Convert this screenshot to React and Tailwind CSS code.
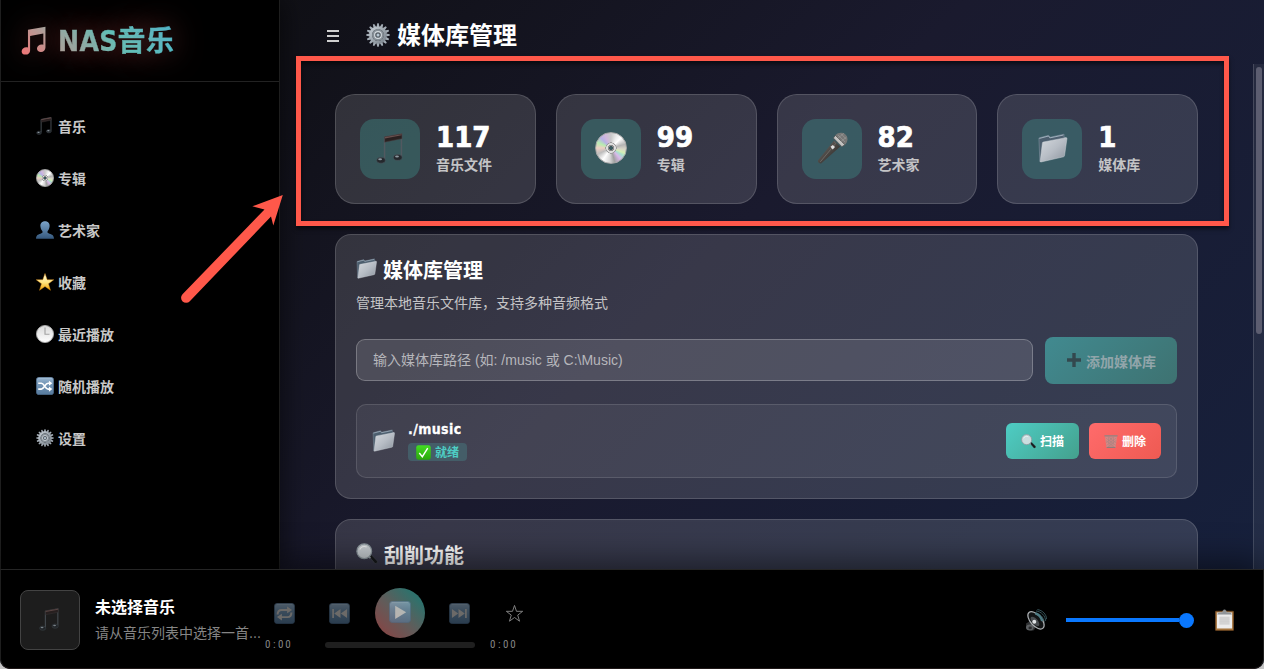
import clsx from 'clsx';

const NAV_ITEMS = [
  { label: '音乐', icon: NoteIcon },
  { label: '专辑', icon: DiscIcon },
  { label: '艺术家', icon: PersonIcon },
  { label: '收藏', icon: StarIcon },
  { label: '最近播放', icon: ClockIcon },
  { label: '随机播放', icon: ShuffleIcon },
  { label: '设置', icon: GearIcon },
];

const STATS = [
  { value: 117, label: '音乐文件', icon: NoteIcon },
  { value: 99, label: '专辑', icon: DiscIcon },
  { value: 82, label: '艺术家', icon: MicIcon },
  { value: 1, label: '媒体库', icon: FolderIcon },
];

// Gradients shared by the icons below
function IconDefs() {
  return (
    <svg className="absolute w-0 h-0" aria-hidden="true">
      <defs>
        <linearGradient id="brand" gradientUnits="userSpaceOnUse" x1="0" y1="32" x2="28" y2="0">
          <stop offset="0" stopColor="#f27475" />
          <stop offset="1" stopColor="#a3a69f" />
        </linearGradient>
        <linearGradient id="person" x1="0" y1="0" x2="0" y2="1">
          <stop offset="0" stopColor="#7ba3c8" />
          <stop offset="1" stopColor="#35587d" />
        </linearGradient>
        <linearGradient id="star" x1="0" y1="0" x2="0" y2="1">
          <stop offset="0.2" stopColor="#fff6c4" />
          <stop offset="0.55" stopColor="#ffe27a" />
          <stop offset="1" stopColor="#f0a000" />
        </linearGradient>
        <linearGradient id="clock" x1="0" y1="0" x2="0" y2="1">
          <stop offset="0" stopColor="#d8d8d8" />
          <stop offset="1" stopColor="#ffffff" />
        </linearGradient>
        <linearGradient id="key" x1="0" y1="0" x2="0" y2="1">
          <stop offset="0" stopColor="#9ab7d2" />
          <stop offset="0.35" stopColor="#7899b8" />
          <stop offset="1" stopColor="#55799c" />
        </linearGradient>
        <linearGradient id="gear" x1="0" y1="0" x2="1" y2="1">
          <stop offset="0" stopColor="#c3cbd2" />
          <stop offset="1" stopColor="#7a838c" />
        </linearGradient>
        <linearGradient id="folder" x1="0" y1="0" x2="1" y2="1">
          <stop offset="0" stopColor="#d4d8dd" />
          <stop offset="0.5" stopColor="#b7bdc5" />
          <stop offset="1" stopColor="#8b939d" />
        </linearGradient>
        <linearGradient id="mic" x1="0" y1="0" x2="1" y2="1">
          <stop offset="0" stopColor="#77736f" />
          <stop offset="1" stopColor="#1d1a18" />
        </linearGradient>
        <linearGradient id="check" x1="0" y1="0" x2="0" y2="1">
          <stop offset="0" stopColor="#43dd22" />
          <stop offset="1" stopColor="#2aa80c" />
        </linearGradient>
      </defs>
    </svg>
  );
}

function NoteIcon({ className }) {
  return (
    <svg viewBox="0 0 28 32" className={className}>
      <path d="M8.900 27V4.500L26.400 1v23.500" fill="none" stroke="#515960" strokeWidth="1.500" />
      <path d="M9 3.800 26.900.6v5.200L9 9.400z" fill="#2a2020" stroke="#4b4547" strokeWidth="0.500" />
      <path d="M9.300 4.200 26.600 1.100v1.200L9.300 5.500z" fill="#69504e" />
      <ellipse cx="5.200" cy="28.200" rx="4.400" ry="3" fill="#24282c" stroke="#4a545c" strokeWidth="0.600" />
      <ellipse cx="22.600" cy="25.300" rx="4.400" ry="3" fill="#24282c" stroke="#4a545c" strokeWidth="0.600" />
      <ellipse cx="4.300" cy="27.200" rx="2" ry="1.100" fill="#a9b5be" opacity="0.800" />
      <ellipse cx="21.800" cy="24.300" rx="2" ry="1.100" fill="#a9b5be" opacity="0.800" />
    </svg>
  );
}

function BrandNote({ className }) {
  return (
    <svg viewBox="0 0 28 32" className={className}>
      <path
        d="M7.800 4 27.400.6v23.200c0 3-2.200 5-5.100 5-2.600 0-4.400-1.500-4.400-3.800 0-2.700 2.400-4.600 5.200-4.600.7 0 1.300.1 1.900.3V8.200L10.200 11v16.100c0 3-2.200 4.700-5 4.700-2.700 0-4.500-1.300-4.500-3.600 0-2.700 2.400-4.600 5.200-4.600.7 0 1.300.1 1.900.3z"
        fill="url(#brand)"
      />
    </svg>
  );
}

function DiscIcon({ className }) {
  return (
    <span
      className={clsx(
        'block rounded-full border border-[#a7a7a7] bg-[radial-gradient(circle,#3a5a60_0_9%,#8c8c8c_10%_15%,#dedede_16%_22%,#9c9c9c_23%_26%,transparent_27%),conic-gradient(#c9c9c9,#ececec_25deg,#ffffff_45deg,#b4b4b4_75deg,#d8d6c8_95deg,#d5efb4_110deg,#a9e0cf_122deg,#dab8ea_140deg,#a0a0a0_165deg,#d6d6d6_185deg,#ffffff_215deg,#bdbdbd_245deg,#eecfc3_270deg,#b7ecb0_292deg,#b8b1e6_315deg,#d0b7dc_335deg,#c9c9c9)]',
        className
      )}
    />
  );
}

function PersonIcon({ className }) {
  return (
    <svg viewBox="0 0 32 32" className={className}>
      <path
        d="M16 .4c5.500 0 8.600 3.800 8.200 9-.3 4-1.900 6.800-3.700 8.600v2.200c0 1.200 1 1.800 3.400 2.500 5 1.500 8 2.800 8 8.900H.1c0-6.100 3-7.400 8-8.900 2.400-.7 3.400-1.300 3.400-2.500V18c-1.800-1.800-3.400-4.600-3.700-8.600-.4-5.200 2.700-9 8.200-9z"
        fill="url(#person)"
      />
    </svg>
  );
}

function StarIcon({ className }) {
  return (
    <svg viewBox="0 0 32 32" className={className}>
      <path
        d="m16 .8 3.900 11.200h11.700l-9.400 7.100 3.500 11.700L16 23.900l-9.700 6.900 3.500-11.700L.4 12h11.700z"
        fill="url(#star)"
        stroke="#dc8b13"
        strokeWidth="0.800"
      />
    </svg>
  );
}

function ClockIcon({ className }) {
  return (
    <svg viewBox="0 0 32 32" className={className}>
      <circle cx="16" cy="16" r="15.200" fill="url(#clock)" stroke="#a9a9a9" strokeWidth="1.600" />
      <path d="M16 4.500v12h8" fill="none" stroke="#a2a2a2" strokeWidth="2" />
    </svg>
  );
}

// Rounded blue keycap used by the shuffle and transport icons
function KeyIcon({ className, children }) {
  return (
    <svg viewBox="0 0 32 32" className={className}>
      <rect x="0.500" y="0.500" width="31" height="31" rx="5" fill="url(#key)" stroke="#496a8b" />
      <path d="M4 2h24" stroke="#bcd0e2" strokeWidth="1" opacity="0.700" />
      {children}
    </svg>
  );
}

function ShuffleIcon({ className }) {
  return (
    <KeyIcon className={className}>
      <path
        d="M4 11h5.500c5 0 6.500 10.500 12 10.500H25M4 21.500h5.500c5 0 6.500-10.500 12-10.500H25"
        fill="none"
        stroke="#fff"
        strokeWidth="2.800"
      />
      <path d="m23 6.500 6 4.500-6 4.500zM23 17l6 4.500-6 4.500z" fill="#fff" />
    </KeyIcon>
  );
}

function RepeatIcon({ className }) {
  return (
    <KeyIcon className={className}>
      <path
        d="M5.500 17.500c0-5 2-7 6-7h10M26.500 14.500c0 5-2 7-6 7h-10"
        fill="none"
        stroke="#d8d4d0"
        strokeWidth="3"
      />
      <path d="m20 5.500 7.500 5-7.500 5zM12 16.500l-7.500 5 7.500 5z" fill="#d8d4d0" />
    </KeyIcon>
  );
}

function PrevIcon({ className }) {
  return (
    <KeyIcon className={className}>
      <path d="M5 9h2.500v14H5zM17.500 9v14L8 16zM27.500 9v14L18 16z" fill="#d8d4d0" />
    </KeyIcon>
  );
}

function NextIcon({ className }) {
  return (
    <KeyIcon className={className}>
      <path d="M24.500 9H27v14h-2.500zM4.500 9v14l9.500-7zM14.500 9v14l9.500-7z" fill="#d8d4d0" />
    </KeyIcon>
  );
}

function PlayIcon({ className }) {
  return (
    <KeyIcon className={className}>
      <path d="M9 7v19l16-9.500z" fill="#f2efec" />
    </KeyIcon>
  );
}

function GearIcon({ className }) {
  const teeth = Array.from({ length: 16 }, (_, i) => i * 22.5);
  return (
    <svg viewBox="0 0 32 32" className={className}>
      {teeth.map((angle) => (
        <path
          key={angle}
          d="M14 5.500 15 .4h2l1 5.100z"
          fill="#a4adb6"
          transform={`rotate(${angle} 16 16)`}
        />
      ))}
      <circle cx="16" cy="16" r="9.800" fill="none" stroke="url(#gear)" strokeWidth="4" />
      <circle cx="16" cy="16" r="8" fill="#858e96" />
      <circle cx="16" cy="16" r="4.500" fill="#555d65" stroke="#d5dbe0" strokeWidth="1.500" />
      <circle cx="16" cy="16" r="2" fill="#b8c7d3" />
    </svg>
  );
}

function MicIcon({ className }) {
  return (
    <svg viewBox="0 0 32 32" className={className}>
      <path d="m18 8.500 6.300 6L5.400 31.200c-1.300 1-4.300-1.300-3.300-2.900z" fill="url(#mic)" />
      <path d="m18.200 9.800 1.600 1.600L4.300 29.800" fill="none" stroke="#77716c" strokeWidth="0.800" />
      <path d="m14.500 14.800 2.300-1.800 2.200 2-2.300 2.500z" fill="#e0e0e0" />
      <path d="M18.500 4.300C21.200.4 26.500-.3 29.700 2.800c3.100 3.200 2 8.400-1.800 10.800z" fill="#777776" />
      <path d="m17.400 6 2-2.600 9.400 9.300-2.900 2z" fill="#c4c3c1" stroke="#444" strokeWidth="0.600" />
      <path d="m22 3 7 7M25 1.800l5.200 5.200M22 6.200l6-5M25 9.500l5.500-4.500" stroke="#a4a4a2" strokeWidth="0.500" />
    </svg>
  );
}

function FolderIcon({ className }) {
  return (
    <svg viewBox="0 0 32 32" className={className}>
      <path d="M1.500 5.300 11.800 2.500l1.700 2 14.800-3.200v3.400l2.300.2L4 29.800 2.500 30.500z" fill="#4c5e6e" stroke="#8495a4" strokeWidth="0.600" />
      <path d="M2 5.800 11.700 3.200l1.500 2L27.500 2.200" fill="none" stroke="#a3b3c0" strokeWidth="1" />
      <path d="M6.300 9.600 30.300 5c.9-.1 1.200.3 1.100 1.100l-2.600 18c-.1.800-.4 1.100-1.200 1.300L3.800 30.900c-.7.200-1-.2-.9-.9l2.300-19.200c.1-.7.400-1.100 1.100-1.200z" fill="url(#folder)" stroke="#d3d8dc" strokeWidth="0.500" />
    </svg>
  );
}

function SearchIcon({ className }) {
  return (
    <svg viewBox="0 0 32 32" className={className}>
      <path d="m19.500 20 3-2.600 8.500 8.800c1.300 1.600-1.700 4.800-3.500 3.400z" fill="#17191b" stroke="#50565b" strokeWidth="0.700" />
      <path d="m18 19.500 3 2.500" stroke="#9aa2a8" strokeWidth="2.400" />
      <circle cx="12" cy="12" r="10.700" fill="#dce3e5" fillOpacity="0.880" stroke="#8f9aa0" strokeWidth="1.800" />
      <path d="M5.500 9.500c1.500-4 6-5.500 10-3.700" fill="none" stroke="#fff" strokeWidth="1.600" opacity="0.700" />
    </svg>
  );
}

function TrashIcon({ className }) {
  return (
    <svg viewBox="0 0 32 32" className={className}>
      <path d="M2 4h28l-3.600 26c-.3 1.300-20.400 1.300-20.800 0z" fill="#c09a97" fillOpacity="0.650" />
      <path
        d="M4 8l23 17M4.500 14 24 29M10 5.500 27.500 19M28 8 5.500 25M27.500 14 8 29M22 5.500 4.500 19M10 6l2 24M16 6v24M22 6l-2 24"
        stroke="#8f8280"
        strokeWidth="0.800"
      />
      <rect x="0.500" y="1.500" width="31" height="3" rx="1.500" fill="#8d8584" />
      <path d="M6 29.500h20" stroke="#857b7a" strokeWidth="2.200" />
    </svg>
  );
}

function CheckIcon({ className }) {
  return (
    <svg viewBox="0 0 32 32" className={className}>
      <rect x="0.500" y="0.500" width="31" height="31" rx="5" fill="url(#check)" />
      <path d="m7 17 6.500 8L25 6.500" fill="none" stroke="#fff" strokeWidth="3" />
    </svg>
  );
}

function SpeakerIcon({ className }) {
  return (
    <svg viewBox="0 0 32 32" className={className}>
      <path d="M1.500 21 8 17l9 7-4 7c-4 1.500-10.500-.5-11.500-4z" fill="#303234" />
      <ellipse cx="7" cy="27" rx="5.500" ry="4.300" fill="#5c5f62" />
      <ellipse cx="7.500" cy="27.500" rx="2.500" ry="2" fill="#2a2b2d" />
      <path d="M15 5.500c7 1 12 6.500 13 14M16 2.800c8 1 13.500 7 14 14.500M18 .8c8 1.200 13 7 13.500 14" fill="none" stroke="#456a72" strokeWidth="1.100" />
      <ellipse cx="16" cy="16.500" rx="8" ry="15.300" transform="rotate(-42 16 16.500)" fill="#121415" stroke="#a9adb0" strokeWidth="1.800" />
      <path d="M15 6.500c5 1.500 8.500 5.500 10 11" fill="none" stroke="#4e7b84" strokeWidth="3.500" />
      <ellipse cx="14.500" cy="18" rx="4" ry="8.500" transform="rotate(-42 14.500 18)" fill="#484c50" />
      <circle cx="13.500" cy="18.500" r="2.900" fill="#dfe2e4" />
    </svg>
  );
}

function ClipboardIcon({ className }) {
  return (
    <svg viewBox="0 0 28 32" className={className}>
      <rect x="0.500" y="3" width="27" height="28.500" rx="1" fill="#a5733b" stroke="#6b4420" />
      <path d="M2.800 5h22.400v23.500H2.800z" fill="#ececec" />
      <path d="M6.500 11h15v12h-15z" fill="#d6d6d6" />
      <path d="M6.500 13h15M6.500 15.500h15M6.500 18h15M6.500 20.500h15" stroke="#c6c6c6" strokeWidth="0.600" />
      <path d="M3.500 7.800c0-2.300 2-3.300 6-3.300h1.700c0-5 5.600-5 5.600 0h1.700c4 0 6 1 6 3.300z" fill="#8f9498" stroke="#b4b8bb" strokeWidth="0.500" />
    </svg>
  );
}

function Sidebar() {
  return (
    <aside className="relative z-10 w-[280px] shrink-0 bg-black border-x border-[#1e1e1e] shadow-[4px_0_24px_rgba(0,0,0,0.5)]">
      <div className="h-[82px] flex items-center pl-[20px] border-b border-[#222222]">
        <BrandNote className="w-[25px] h-[29px] mr-[12px] [filter:drop-shadow(0_0_14px_rgba(255,107,107,0.35))]" />
        <h1 className="text-[28px] leading-[42px] pt-[2px] font-bold whitespace-nowrap tracking-[0.300px] text-transparent bg-clip-text bg-[linear-gradient(45deg,#b59f98_0%,#4ecdc4_52%,#45b7d1_100%)] [text-shadow:0_0_30px_rgba(255,107,107,0.5)] [-webkit-text-stroke:0.400px_transparent]">
          NAS音乐
        </h1>
      </div>
      <nav className="pt-[19px]">
        {NAV_ITEMS.map(({ label, icon: Icon }) => (
          <div key={label} className="h-[52px] flex items-center pl-[35px] gap-[4px]">
            <Icon className={clsx('h-[18px] shrink-0 -mt-[2px]', Icon === NoteIcon ? 'w-[16px] mr-[2px]' : 'w-[18px]')} />
            <span className="text-[14px] font-bold leading-[20px] text-[#c8c8c8]">{label}</span>
          </div>
        ))}
      </nav>
    </aside>
  );
}

function StatCard({ value, label, icon: Icon }) {
  return (
    <div className="h-[110px] flex items-center gap-[16px] px-[24px] rounded-[20px] border border-white/15 bg-[#ffffff22]">
      <div className="w-[60px] h-[60px] shrink-0 rounded-[14px] bg-[#3b8480]/45 flex items-center justify-center">
        <Icon
          className={clsx(
            '-mt-[2px]',
            Icon === NoteIcon && 'w-[27px] h-[31px] -ml-[2px]',
            Icon === FolderIcon && 'w-[31px] h-[30px]',
            Icon !== NoteIcon && Icon !== FolderIcon && 'w-[32px] h-[32px]'
          )}
        />
      </div>
      <div>
        <div className="-mt-[3px] text-[29px] leading-[32px] h-[32px] font-bold text-white [-webkit-text-stroke:0.700px_white] [font-family:'DejaVu_Sans_Condensed','DejaVu_Sans',sans-serif] [font-stretch:condensed]">
          {value}
        </div>
        <div className="text-[14px] leading-[20px] font-bold text-[#c4c4c6] mt-[2px]">{label}</div>
      </div>
    </div>
  );
}

function LibrarySection() {
  return (
    <section className="h-[265px] p-[20px] rounded-[16px] border border-white/15 bg-[#ffffff22]">
      <h3 className="flex items-center gap-[6px] h-[30px] text-[20px] font-bold text-white">
        <FolderIcon className="w-[21px] h-[21px] -mt-[3px]" />
        <span className="pt-[2px]">媒体库管理</span>
      </h3>
      <p className="mt-[7px] text-[14px] leading-[22px] text-[#c4c4c6]">管理本地音乐文件库，支持多种音频格式</p>
      <div className="mt-[23px] flex items-center gap-[12px]">
        <div className="flex-1 h-[42px] -mt-[1px] px-[16px] flex items-center rounded-[9px] border border-white/25 bg-white/12 text-[14px] text-[#b6b6bb] [font-family:'Liberation_Sans','Noto_Sans_CJK_SC',sans-serif]">
          输入媒体库路径 (如: /music 或 C:\Music)
        </div>
        <button className="w-[132px] h-[47px] flex items-center justify-center gap-[5px] rounded-[8px] bg-[linear-gradient(135deg,#418a90,#3e7271)] text-[14px] font-bold text-[#91a5aa]">
          <svg viewBox="0 0 14 14" className="w-[14px] h-[14px] -mt-[1px] ml-[1px]">
            <path d="M7 0v14M0 7h14" stroke="#33484e" strokeWidth="3.400" />
          </svg>
          <span className="pt-[3px]">添加媒体库</span>
        </button>
      </div>
      <div className="mt-[20px] h-[74px] px-[15px] flex items-center rounded-[10px] border border-white/12 bg-white/6">
        <FolderIcon className="w-[23px] h-[23px] -mt-[2px] mr-[1px]" />
        <div className="ml-[12px] flex-1">
          <div className="h-[24px] text-[14px] leading-[24px] tracking-[0.400px] font-bold text-white [-webkit-text-stroke:0.300px_white] [font-family:'DejaVu_Sans_Condensed','DejaVu_Sans',sans-serif] [font-stretch:condensed]">
            ./music
          </div>
          <div className="mt-[2px] inline-flex items-center gap-[4px] h-[18px] w-[59px] px-[8px] rounded-[4px] bg-[#445d68] text-[12px] font-bold text-[#4ecdc4] whitespace-nowrap align-top">
            <CheckIcon className="w-[15px] h-[15px] shrink-0" />
            <span className="pt-[2px]">就绪</span>
          </div>
        </div>
        <div className="flex gap-[10px]">
          <button className="w-[73px] h-[36px] flex items-center justify-center gap-[4px] rounded-[6px] bg-[linear-gradient(135deg,#4ecdc4,#44a08d)] text-[12px] font-bold text-white">
            <SearchIcon className="w-[15px] h-[15px]" />
            <span className="pt-[2px]">扫描</span>
          </button>
          <button className="w-[72px] h-[36px] flex items-center justify-center gap-[4px] rounded-[6px] bg-[linear-gradient(135deg,#ff6b6b,#ee5a52)] text-[12px] font-bold text-white">
            <TrashIcon className="w-[14px] h-[15px]" />
            <span className="pt-[2px]">删除</span>
          </button>
        </div>
      </div>
    </section>
  );
}

function Player() {
  return (
    <footer className="relative z-20 h-[100px] shrink-0 pt-[2px] flex items-center bg-black border border-t-[#252525] border-x-[#1e1e1e] border-b-[#1f1818] rounded-b-[10px] shadow-[0_-8px_32px_rgba(0,0,0,0.5)]">
      <div className="ml-[19px] w-[60px] h-[60px] shrink-0 rounded-[8px] border border-[#434343] bg-[#1d1d1d] flex items-center justify-center">
        <NoteIcon className="w-[20px] h-[25px] -ml-[3px] -mt-[2px] opacity-80" />
      </div>
      <div className="ml-[15px] w-[170px] shrink-0">
        <div className="text-[16px] leading-[24px] font-bold text-white">未选择音乐</div>
        <div className="mt-[2px] text-[14px] leading-[22px] text-[#858585] whitespace-nowrap">请从音乐列表中选择一首...</div>
      </div>
      <div className="w-[270px] shrink-0">
        <div className="flex items-center gap-[15px]">
          <div className="w-[40px] flex justify-center">
            <RepeatIcon className="w-[21px] h-[21px] mr-[1px] opacity-50" />
          </div>
          <div className="w-[40px] flex justify-center">
            <PrevIcon className="w-[21px] h-[21px] mr-[1px] opacity-50" />
          </div>
          <div className="w-[50px] h-[50px] rounded-full bg-[linear-gradient(45deg,#8f4040,#5f5d5b_48%,#2f716c_82%)] flex items-center justify-center">
            <PlayIcon className="w-[22px] h-[22px] -mt-[3px] opacity-60" />
          </div>
          <div className="w-[40px] flex justify-center">
            <NextIcon className="w-[21px] h-[21px] mr-[1px] opacity-50" />
          </div>
          <div className="w-[40px] flex justify-center">
            <svg viewBox="0 0 20 20" className="w-[19px] h-[19px] mr-[1px]">
              <path
                d="m10 1.500 2.100 6.200h6.500l-5.200 4 1.900 6.400L10 14.200l-5.300 3.900 1.900-6.400-5.200-4h6.500z"
                fill="none"
                stroke="#858585"
                strokeWidth="1"
              />
            </svg>
          </div>
        </div>
        <div className="h-[14px] flex items-center gap-[15px] text-[11px] leading-[14px] tracking-[1.700px] text-[#858585] [font-family:Roboto,sans-serif]">
          <span className="w-[45px]">
            0<span className="mx-[0.800px]">:</span>00
          </span>
          <span className="w-[150px] h-[6px] rounded-full bg-[#1f1f1f]" />
          <span className="w-[45px]">
            0<span className="mx-[0.800px]">:</span>00
          </span>
        </div>
      </div>
      <div className="ml-auto mr-[29px] flex items-center">
        <SpeakerIcon className="w-[22px] h-[22px]" />
        <div className="ml-[19px] flex items-center w-[128px]">
          <span className="flex-1 h-[4px] bg-[#0a78ff]" />
          <span className="w-[15px] h-[15px] shrink-0 rounded-full bg-[#0a78ff]" />
        </div>
        <ClipboardIcon className="ml-[21px] w-[19px] h-[22px]" />
      </div>
    </footer>
  );
}

// Red frame and arrow pointing at the statistics row
function Callout() {
  return (
    <>
      <div className="absolute z-30 left-[296px] top-[56px] w-[933px] h-[170px] border-[5px] border-[#ff584a] shadow-[0_3px_4px_rgba(0,0,0,0.55),inset_0_3px_4px_rgba(0,0,0,0.55)]" />
      <svg viewBox="0 0 120 120" className="absolute z-30 left-[170px] top-[190px] w-[120px] h-[120px]">
        <path d="M112.800 5 82.300 16.300 94.500 19.500 12.500 104.200A5 5 0 0 0 19.800 111.300L101 26.500 103.300 35.500z" fill="#ff584a" />
      </svg>
    </>
  );
}

export default function App() {
  return (
    <div className="relative w-[1264px] h-[669px] overflow-hidden bg-[#d8d8d8] [font-family:'DejaVu_Sans_Condensed','Noto_Sans_CJK_SC',sans-serif] [font-stretch:condensed]">
      <IconDefs />
      <div className="w-full h-full flex flex-col rounded-b-[10px] bg-[linear-gradient(135deg,#0c0c0c_0%,#1a1a2e_50%,#16213e_100%)]">
        <div className="h-[569px] flex">
          <Sidebar />
          <div className="flex-1 min-w-0 flex flex-col">
            <header className="h-[64px] pt-[8px] pl-[47px] flex items-center">
              <div className="w-[12px] flex flex-col gap-[2px]">
                <span className="h-[2px] bg-[#d0d0d0]" />
                <span className="h-[2px] mt-px bg-[#d0d0d0]" />
                <span className="h-[2px] mt-px bg-[#d0d0d0]" />
              </div>
              <GearIcon className="ml-[27px] w-[24px] h-[24px] -mt-[2px]" />
              <h2 className="ml-[7px] text-[24px] leading-[36px] font-bold text-white">媒体库管理</h2>
            </header>
            <div className="h-[505px] flex">
              <main className="flex-1 overflow-hidden pt-[30px] pl-[55px] pr-[55px]">
                <div className="grid grid-cols-4 gap-[20px]">
                  {STATS.map((stat) => (
                    <StatCard key={stat.label} {...stat} />
                  ))}
                </div>
                <div className="mt-[30px] flex flex-col gap-[20px]">
                  <LibrarySection />
                  <section className="h-[265px] p-[20px] rounded-[16px] border border-white/15 bg-[#ffffff22]">
                    <h3 className="flex items-center gap-[6px] h-[30px] text-[20px] font-bold text-white">
                      <SearchIcon className="w-[22px] h-[22px] -mt-[3px]" />
                      <span className="pt-[2px]">刮削功能</span>
                    </h3>
                  </section>
                </div>
              </main>
              <div className="w-[11px] shrink-0 border-l border-white/15 bg-white/6 pt-[3px] pl-[2px]">
                <div className="w-[6px] h-[267px] rounded-full bg-[#5c5d70]" />
              </div>
            </div>
          </div>
        </div>
        <Player />
      </div>
      <Callout />
    </div>
  );
}
